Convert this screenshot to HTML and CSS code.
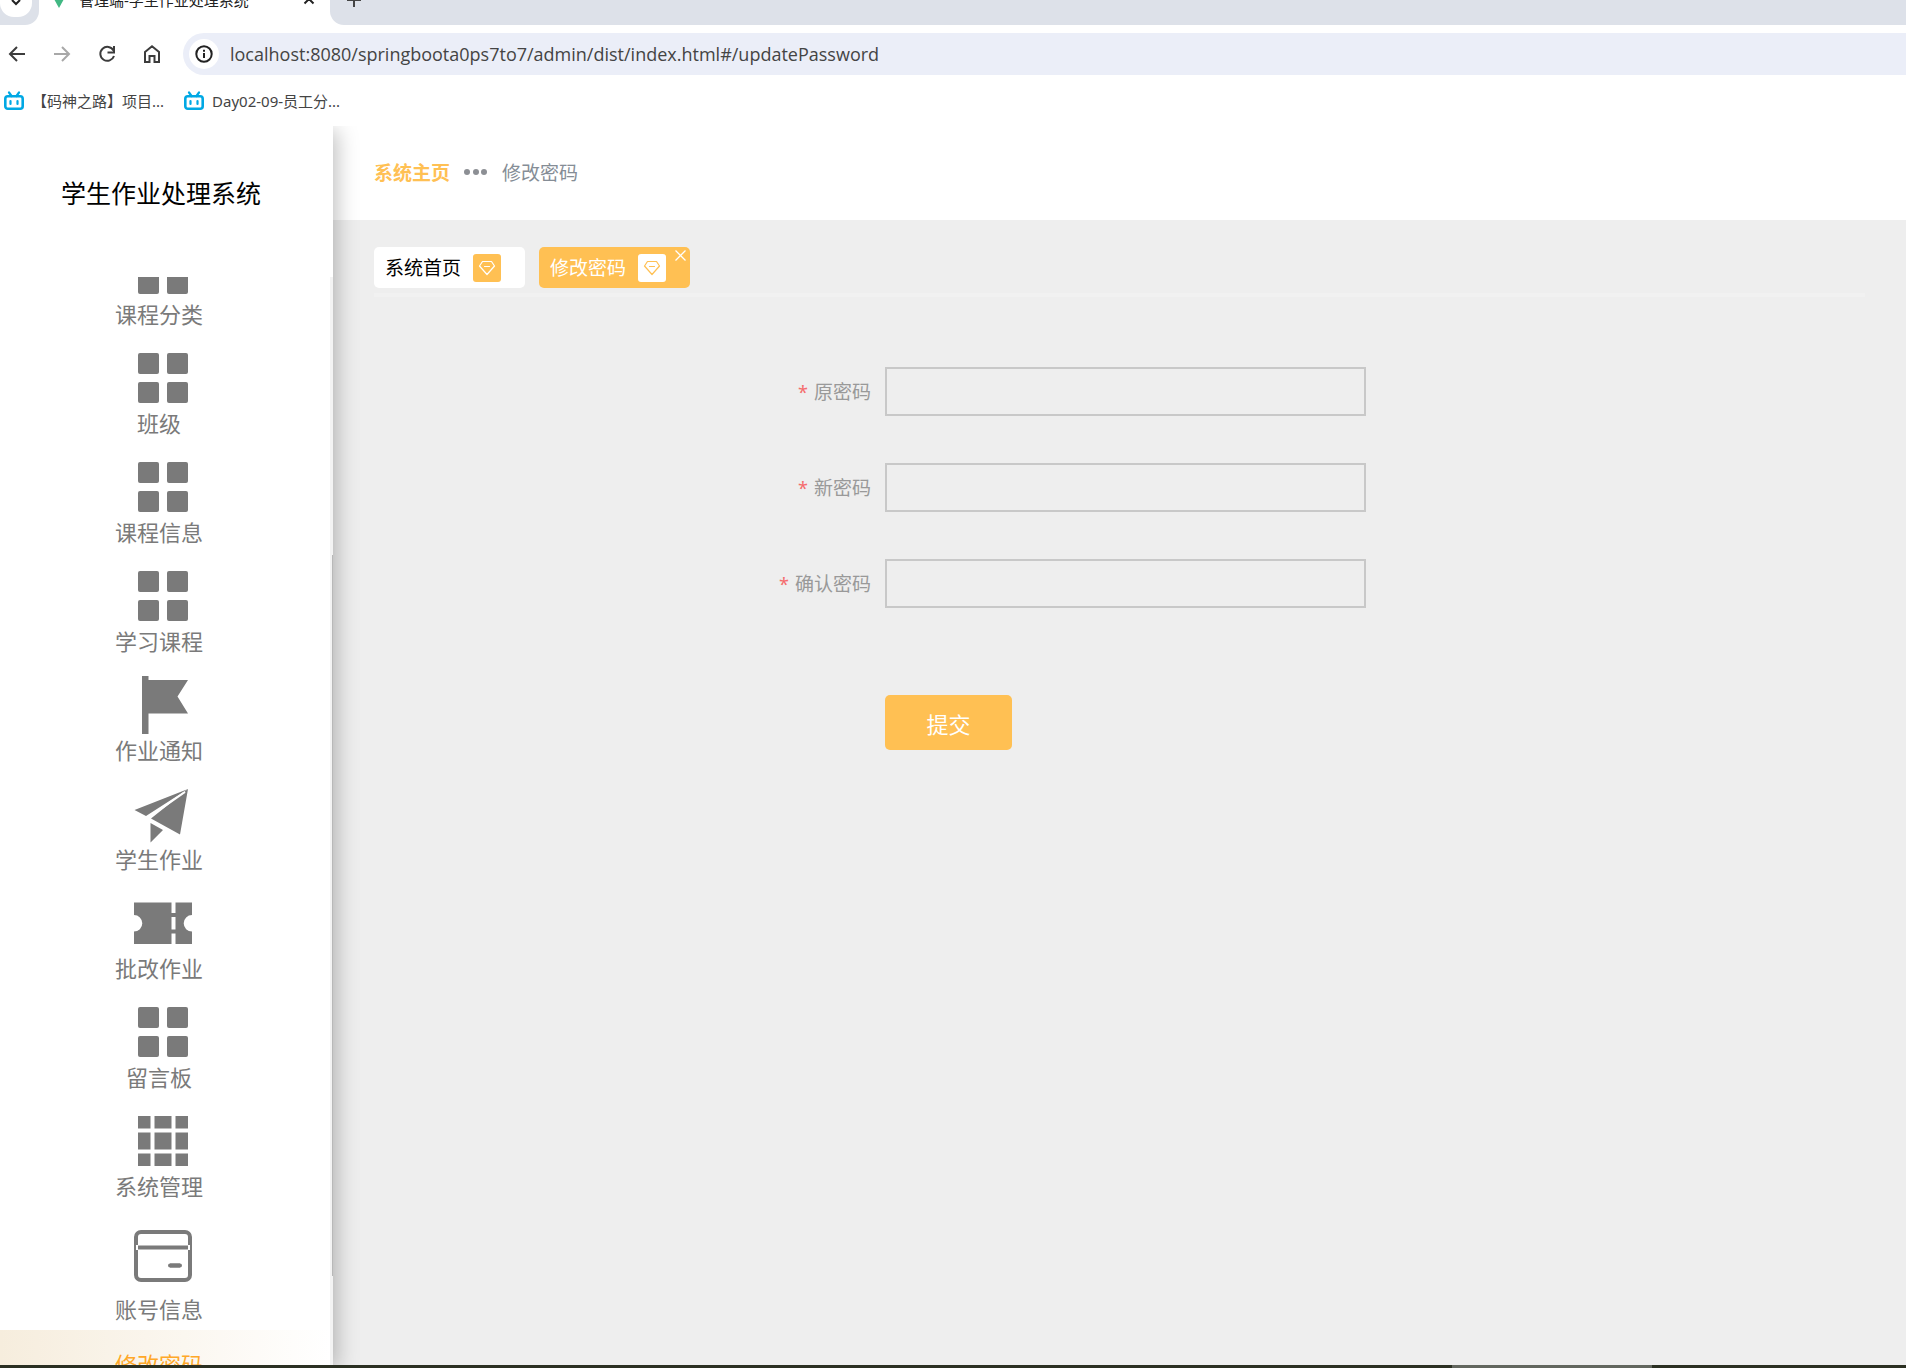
FILE: index.html
```html
<!DOCTYPE html>
<html lang="zh-CN">
<head>
<meta charset="utf-8">
<meta name="viewport" content="width=device-width, initial-scale=1">
<title>管理端-学生作业处理系统</title>
<link rel="stylesheet" href="styles.css">
</head>
<body>
<svg class="sprite" aria-hidden="true">
  <symbol id="menu" viewBox="0 0 66 66"><rect x="8" y="8" width="21" height="21" rx="2"/><rect x="37" y="8" width="21" height="21" rx="2"/><rect x="8" y="37" width="21" height="21" rx="2"/><rect x="37" y="37" width="21" height="21" rx="2"/></symbol>
  <symbol id="flag" viewBox="0 0 66 66"><path d="M12 4h6.500v4H58L47.500 24.500 58 41.500H18.500V62H12z"/></symbol>
  <symbol id="plane" viewBox="0 0 66 66"><path d="M58 8 4.500 29 16 35zM58 8 50 53.500 21 37.500zM20.500 42 33 49 20.500 61.500z"/><path d="M55 11 18.500 36.500" stroke="#fff" stroke-width="2"/></symbol>
  <symbol id="ticket" viewBox="0 0 66 66"><path d="M4 12.500h37.500v10.500h4V12.500H62V25a8.300 8.300 0 0 0 0 16.600V54H45.500V43.500h-4V54H4V41.600A8.300 8.300 0 0 0 4 25zM41.500 27v12.500h4V27z" fill-rule="evenodd"/></symbol>
  <symbol id="grid" viewBox="0 0 66 66"><path d="M8 8h12.500v12.500H8zM24.500 8h17v12.500h-17zM45.500 8H58v12.500H45.500zM8 24.500h12.500v17H8zM24.500 24.500h17v17h-17zM45.500 24.500H58v17H45.500zM8 45.500h12.500V58H8zM24.500 45.500h17V58h-17zM45.500 45.500H58V58H45.500z"/></symbol>
  <symbol id="card" viewBox="0 0 66 66"><rect x="6" y="9" width="54" height="48" rx="5" fill="none" stroke="currentColor" stroke-width="4"/><path d="M8 24.500h50M40 42.500h10" fill="none" stroke="currentColor" stroke-width="4"/><path d="M40 42.500h10" stroke="currentColor" stroke-width="4" stroke-linecap="round"/><path d="M7 22v5M59 22v5" stroke="#fff" stroke-width="2"/></symbol>
  <symbol id="gem" viewBox="0 0 18 18"><path d="M4.500 2.500h9l3 4.500L9 15.500 1.500 7zM6.500 7.500h5" fill="none" stroke="currentColor" stroke-width="1.200" stroke-linejoin="round" stroke-linecap="round"/></symbol>
  <symbol id="tv" viewBox="0 0 20 20"><rect x="1.300" y="5.300" width="17.400" height="12.400" rx="2.500" fill="none" stroke="currentColor" stroke-width="2.600"/><path d="M5 1.500 7.500 5M15 1.500 12.500 5M6.500 10v3M13.500 10v3" stroke="currentColor" stroke-width="2.200" stroke-linecap="round"/></symbol>
</svg>

<div class="browser">
  <div class="tabstrip">
    <div class="strip-start"><button class="tab-search" aria-label="搜索标签页"><svg width="10" height="6" viewBox="0 0 10 6"><path d="M1 0l4 4 4-4" fill="none" stroke="#222" stroke-width="2"/></svg></button></div>
    <div class="tab">
      <svg class="favicon" width="20" height="18" viewBox="0 0 20 18"><path d="M0 0h20L10 18z" fill="#41b883"/><path d="M4 0h12l-6 10z" fill="#35495e"/></svg>
      <span class="tab-title">管理端-学生作业处理系统</span>
      <button class="tab-x" aria-label="关闭标签页"><svg width="12" height="12" viewBox="0 0 12 12"><path d="M1.500 1.500l9 9M10.500 1.500l-9 9" stroke="#222" stroke-width="2"/></svg></button>
    </div>
    <div class="strip-rest"><button class="tab-new" aria-label="新建标签页"><svg width="14" height="14" viewBox="0 0 14 14"><path d="M7 0v14M0 7h14" stroke="#444" stroke-width="2"/></svg></button></div>
  </div>
  <div class="toolbar">
    <button aria-label="后退"><svg width="18" height="18" viewBox="0 0 18 18"><path d="M17 9H3M9 2 2 9l7 7" fill="none" stroke="#3c3c3c" stroke-width="2"/></svg></button>
    <button aria-label="前进"><svg width="18" height="18" viewBox="0 0 18 18"><path d="M1 9h14M9 2l7 7-7 7" fill="none" stroke="#a8a8a8" stroke-width="2"/></svg></button>
    <button aria-label="刷新"><svg width="18" height="18" viewBox="0 0 18 18"><path d="M15.500 5.500A7 7 0 1 0 16 11M16 1v6.500h-6.500" fill="none" stroke="#3c3c3c" stroke-width="2"/></svg></button>
    <button aria-label="主页"><svg width="18" height="18" viewBox="0 0 18 18"><path d="M2 7l7-5.700L16 7v10h-4.500v-6h-5v6H2z" fill="none" stroke="#3c3c3c" stroke-width="2"/></svg></button>
    <div class="omnibox">
      <span class="site-info"><svg width="18" height="18" viewBox="0 0 18 18"><circle cx="9" cy="9" r="7.700" fill="none" stroke="#222" stroke-width="2"/><path d="M9 8v5M9 4.700v2" stroke="#222" stroke-width="2"/></svg></span>
      <input class="url" type="text" aria-label="地址" value="localhost:8080/springboota0ps7to7/admin/dist/index.html#/updatePassword">
    </div>
  </div>
  <nav class="bookmarks" aria-label="书签">
    <a href="#"><svg width="20" height="20"><use href="#tv"/></svg>【码神之路】项目...</a>
    <a href="#"><svg width="20" height="20"><use href="#tv"/></svg>Day02-09-员工分...</a>
  </nav>
</div>

<div class="app">
  <aside class="sidebar">
    <h1>学生作业处理系统</h1>
    <div class="scroller">
      <nav class="menu" aria-label="主菜单">
        <a href="#"><svg><use href="#menu"/></svg>课程分类</a>
        <a href="#"><svg><use href="#menu"/></svg>班级</a>
        <a href="#"><svg><use href="#menu"/></svg>课程信息</a>
        <a href="#"><svg><use href="#menu"/></svg>学习课程</a>
        <a href="#"><svg><use href="#flag"/></svg>作业通知</a>
        <a href="#"><svg><use href="#plane"/></svg>学生作业</a>
        <a href="#"><svg><use href="#ticket"/></svg>批改作业</a>
        <a href="#"><svg><use href="#menu"/></svg>留言板</a>
        <a href="#"><svg><use href="#grid"/></svg>系统管理</a>
        <a href="#" class="group"><svg><use href="#card"/></svg>账号信息</a>
        <a href="#" class="active">修改密码</a>
      </nav>
      <div class="track"><div class="thumb"></div></div>
    </div>
  </aside>
  <div class="content">
    <header class="crumbs">
      <a href="#">系统主页</a>
      <svg width="24" height="6" viewBox="0 0 24 6"><g fill="#8c8f94"><circle cx="3" cy="3" r="3"/><circle cx="12" cy="3" r="3"/><circle cx="20" cy="3" r="3"/></g></svg>
      <span>修改密码</span>
    </header>
    <main>
      <div class="views">
        <a href="#" class="view">系统首页<span class="badge"><svg width="18" height="18"><use href="#gem"/></svg></span></a>
        <a href="#" class="view current">修改密码<span class="badge"><svg width="18" height="18"><use href="#gem"/></svg></span><svg class="close" width="11" height="11" viewBox="0 0 11 11"><path d="M.500.500l10 10M10.500.500l-10 10" stroke="#fff" stroke-width="1.300"/></svg></a>
      </div>
      <form>
        <label for="old"><span class="req">*</span>原密码</label><input id="old" type="password">
        <label for="new"><span class="req">*</span>新密码</label><input id="new" type="password">
        <label for="confirm"><span class="req">*</span>确认密码</label><input id="confirm" type="password">
        <button type="submit">提交</button>
      </form>
    </main>
  </div>
</div>
<div class="taskbar"><span></span></div>
</body>
</html>
```
FILE: styles.css
```css
* { box-sizing: border-box; }

body {
  display: flex;
  flex-direction: column;
  height: 100vh;
  margin: 0;
  overflow: hidden;
  background: #fff;
  font-family: "Noto Sans", "Noto Sans CJK SC", sans-serif;
  font-weight: 400;
}

a { color: inherit; text-decoration: none; }
button { padding: 0; border: 0; background: none; font: inherit; }
svg { display: block; flex: none; }
.sprite { position: absolute; width: 0; height: 0; }

/* Browser window */
.browser { flex: none; height: 126px; }

.tabstrip { display: flex; height: 25px; }
.strip-start { width: 39px; background: #dde1e9; border-bottom-right-radius: 14px; }
.tab-search {
  display: flex;
  justify-content: center;
  width: 32px;
  height: 17px;
  background: #fff;
  border-radius: 0 0 14px 14px;
}
.tab {
  display: flex;
  align-items: flex-start;
  width: 291px;
  padding: 0 15px 0 10px;
  overflow: hidden;
}
.favicon { margin-top: -10px; }
.tab-title {
  flex: 1;
  margin: -11px 0 0 10px;
  font-size: 15px;
  line-height: 22px;
  color: #222;
  white-space: nowrap;
}
.tab-x { margin-top: -7px; }
.strip-rest {
  flex: 1;
  padding-left: 17px;
  overflow: hidden;
  background: #dde1e9;
  border-bottom-left-radius: 14px;
}
.tab-new { display: block; margin-top: -7px; }

.toolbar {
  display: flex;
  align-items: center;
  gap: 27px;
  height: 58px;
  padding-left: 8px;
}
.omnibox {
  display: flex;
  flex: 1;
  align-items: center;
  gap: 11px;
  height: 42px;
  margin-left: -5px;
  padding-left: 6px;
  background: #ebeef8;
  border-radius: 21px 0 0 21px;
}
.site-info {
  display: grid;
  place-items: center;
  width: 30px;
  height: 30px;
  background: #fff;
  border-radius: 50%;
}
.url {
  flex: 1;
  padding: 0;
  border: 0;
  background: none;
  font: 400 18px "Open Sans", sans-serif;
  color: #444;
}

.bookmarks {
  display: flex;
  gap: 20px;
  align-items: center;
  height: 35px;
  padding-left: 4px;
  font-size: 15px;
  color: #444;
}
.bookmarks a { display: flex; align-items: center; gap: 8px; }
.bookmarks svg { color: #00a8e4; }

/* Application */
.app { display: flex; flex: 1; min-height: 0; }

.sidebar {
  z-index: 1;
  display: flex;
  flex: none;
  flex-direction: column;
  width: 333px;
  background: #fff;
  box-shadow: 4px 4px 20px rgba(0, 0, 0, .25);
  clip-path: inset(0 -30px 0 0);
}
h1 {
  flex: none;
  height: 151px;
  margin: 0;
  padding: 0 11px 17px 0;
  font-size: 25px;
  font-weight: 400;
  line-height: 134px;
  text-align: center;
  color: #000;
}
.scroller { display: flex; flex: 1; min-height: 0; overflow: hidden; }
.menu {
  flex: 1;
  margin-top: -49px;
  font-size: 22px;
  line-height: 24px;
  color: #7a7a7a;
}
.menu a {
  display: flex;
  flex-direction: column;
  align-items: center;
  padding: 8px 12px 11px 0;
}
.menu svg { width: 66px; height: 66px; margin-left: 8px; fill: currentColor; }
.menu .group { gap: 8px; padding: 14px 12px 9px 0; }
.menu .active {
  padding-top: 22px;
  background: linear-gradient(90deg, #f6eddd, #fff);
  color: #ffa828;
}
.track { width: 3px; padding: 278px 0 89px 2px; background: #f3f3f3; }
.thumb { height: 100%; background: #b8b8b8; }

.content { display: flex; flex: 1; flex-direction: column; min-width: 0; }
.crumbs {
  display: flex;
  flex: none;
  align-items: center;
  gap: 14px;
  height: 94px;
  padding: 0 41px 3px;
  font-size: 19px;
  color: #858d96;
}
.crumbs a { font-weight: 700; color: #ffc053; }

main { flex: 1; padding: 27px 41px; background: #eee; }
.views {
  display: flex;
  gap: 14px;
  height: 50px;
  padding-bottom: 5px;
  border-bottom: 4px solid #f1f1f1;
}
.view {
  position: relative;
  display: flex;
  align-items: center;
  gap: 12px;
  width: 151px;
  padding-left: 11px;
  background: #fff;
  border-radius: 5px;
  font-size: 19px;
  line-height: 40px;
  color: #000;
}
.badge {
  display: grid;
  place-items: center;
  width: 28px;
  height: 28px;
  background: #ffc053;
  border-radius: 3px;
  color: #fff;
}
.current { background: #ffc053; color: #fff; }
.current .badge { background: #fff; color: #ffc053; }
.close { position: absolute; top: 3px; right: 4px; }

form {
  display: grid;
  grid-template-columns: calc(100% / 3) minmax(0, 481px);
  gap: 47px 14px;
  padding-top: 70px;
}
label {
  display: flex;
  justify-content: flex-end;
  gap: 6px;
  height: 49px;
  font-size: 19px;
  line-height: 50px;
  color: #999;
}
.req { color: #f56c6c; font-size: 18px; }
form input {
  height: 49px;
  padding: 0 12px;
  border: 2px solid #c8c8c8;
  border-radius: 0;
  background: none;
  font-size: 19px;
}
form button {
  grid-column: 2;
  width: 127px;
  height: 55px;
  margin-top: 40px;
  background: #ffc053;
  border-radius: 5px;
  font-size: 22px;
  color: #fff;
}

.taskbar { flex: none; height: 3px; padding-left: 76.2%; background: #2b3022; }
.taskbar span { display: block; width: 200px; height: 3px; background: #62665e; }
```
